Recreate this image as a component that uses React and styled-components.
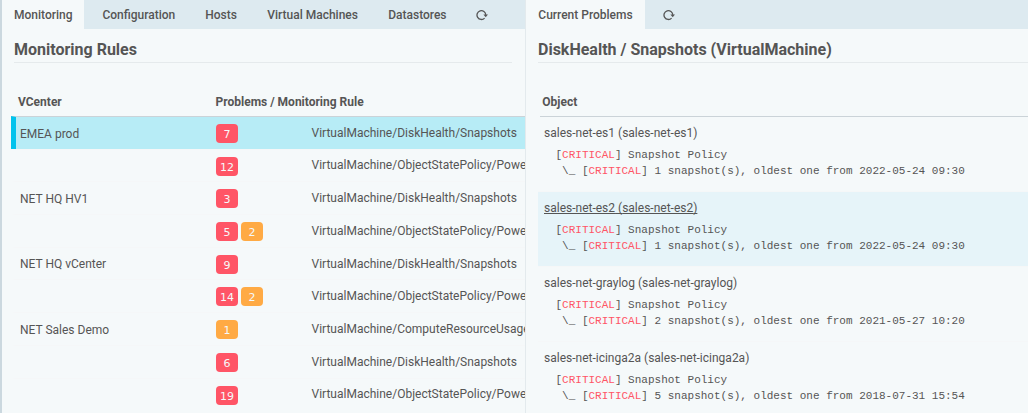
import React from "react";
import styled, { createGlobalStyle } from "styled-components";

const GlobalStyle = createGlobalStyle`
  * { box-sizing: border-box; }
  html, body { margin: 0; height: 413px; overflow: hidden; }
  body { background: #f5f9fa; color: #555; font: 12px/18px Roboto, sans-serif; }
`;

const Layout = styled.div`
  display: flex;
  width: 1028px;
  height: 413px;
  overflow: hidden;
`;

const Column = styled.section`
  width: ${(p) => p.$width}px;
  flex: none;
  overflow: hidden;
  border-left: ${(p) => p.$edge};
`;

const Tabs = styled.nav`
  display: flex;
  height: 29px;
  background: #ddeaf0;
`;

const Tab = styled.a`
  width: ${(p) => p.$width}px;
  padding-left: ${(p) => p.$pad}px;
  flex: none;
  font-weight: 500;
  line-height: 31px;
  white-space: nowrap;
  background: ${(p) => (p.$active ? "#f5f9fa" : "transparent")};
`;

const RefreshSvg = styled.svg`
  display: block;
  margin-top: 9px;
`;

const Title = styled.h1`
  margin: 0 ${(p) => p.$right}px 0 12px;
  height: 34px;
  padding-top: 11px;
  border-bottom: 1px solid #e5eaec;
  font-size: 16px;
  line-height: 19px;
  font-weight: 700;
  white-space: nowrap;
`;

const HeadRow = styled.div`
  display: flex;
  height: 54px;
  margin-left: ${(p) => p.$left}px;
  padding: 30px 0 0 ${(p) => p.$pad}px;
  border-bottom: 1px solid #cbd3d8;
  font-weight: 700;
  white-space: nowrap;
`;

const HeadCell = styled.div`
  width: ${(p) => p.$width};
`;

const RuleTable = styled.div`
  margin-top: -1px;
  padding-left: 9px;
`;

const RuleRow = styled.div`
  display: flex;
  height: 32.7px;
  border-left: 5px solid ${(p) => (p.$active ? "#00c3ed" : "transparent")};
  border-top: ${(p) => (p.$active ? "1px solid #cbd3d8" : "1px solid #f5f7f8")};
  background: ${(p) => (p.$active ? "#b7ecf6" : "transparent")};
  background-clip: padding-box;
  white-space: nowrap;
`;

const VCenter = styled.div`
  width: 200px;
  padding: 7.7px 0 0 4px;
  flex: none;
`;

const Badges = styled.div`
  display: flex;
  gap: 3px;
  width: 95.5px;
  padding-top: 7px;
  flex: none;
`;

const Badge = styled.span`
  width: 22px;
  height: 19px;
  border-radius: 4px;
  background: ${(p) => (p.$state === "warning" ? "#ffaa44" : "#ff5566")};
  color: #f5f9fa;
  font: 11px/21px "DejaVu Sans", sans-serif;
  text-align: center;
`;

const RuleName = styled.div`
  padding-top: 6.8px;
`;

const ObjectRow = styled.article`
  height: 75px;
  margin-left: 12px;
  padding: 7px 0 0 6px;
  border-bottom: 1px solid #f5f7f8;
  background: ${(p) => (p.$hover ? "#e6f4f9" : "transparent")};
  white-space: nowrap;
`;

const ObjectLink = styled.a`
  display: block;
  height: 23px;
  text-decoration: ${(p) => (p.$hover ? "underline" : "none")};
  text-decoration-skip-ink: none;
`;

const Output = styled.pre`
  margin: 0 0 0 11.5px;
  font: 11px/16px "Liberation Mono", monospace;
`;

const Critical = styled.span`
  color: #ff5566;
`;

const RefreshIcon = () => (
  <RefreshSvg width="12" height="12" viewBox="0 0 12 12">
    <path d="M8.6 9.1A4.4 4.4 0 1 1 9.8 5.9" fill="none" stroke="#555" strokeWidth="1.3" />
    <path d="M7.4 5.4H12L9.7 8.3Z" fill="#555" />
  </RefreshSvg>
);

const rules = [
  ["EMEA prod", 7, 0, "DiskHealth/Snapshots"],
  ["", 12, 0, "ObjectStatePolicy/PowerState"],
  ["NET HQ HV1", 3, 0, "DiskHealth/Snapshots"],
  ["", 5, 2, "ObjectStatePolicy/PowerState"],
  ["NET HQ vCenter", 9, 0, "DiskHealth/Snapshots"],
  ["", 14, 2, "ObjectStatePolicy/PowerState"],
  ["NET Sales Demo", 0, 1, "ComputeResourceUsage/Memory"],
  ["", 6, 0, "DiskHealth/Snapshots"],
  ["", 19, 0, "ObjectStatePolicy/PowerState"],
];

const objects = [
  ["sales-net-es1", 1, "2022-05-24 09:30"],
  ["sales-net-es2", 1, "2022-05-24 09:30"],
  ["sales-net-graylog", 2, "2021-05-27 10:20"],
  ["sales-net-icinga2a", 5, "2018-07-31 15:54"],
];

export default function App() {
  return (
    <Layout>
      <GlobalStyle />
      <Column $width={525} $edge="2px solid #cbd8df">
        <Tabs>
          <Tab $active $width={82} $pad={12}>Monitoring</Tab>
          <Tab $width={103} $pad={18.4}>Configuration</Tab>
          <Tab $width={62} $pad={18.2}>Hosts</Tab>
          <Tab $width={121} $pad={18.2}>Virtual Machines</Tab>
          <Tab $width={88} $pad={18.2}>Datastores</Tab>
          <Tab $width={48} $pad={18.4}><RefreshIcon /></Tab>
        </Tabs>
        <Title $right={13}>Monitoring Rules</Title>
        <HeadRow $left={14} $pad={2}>
          <HeadCell $width="197.5px">VCenter</HeadCell>
          <HeadCell $width="auto">Problems / Monitoring Rule</HeadCell>
        </HeadRow>
        <RuleTable>
          {rules.map(([vcenter, critical, warning, rule], i) => (
            <RuleRow key={i} $active={i === 0}>
              <VCenter>{vcenter}</VCenter>
              <Badges>
                {critical > 0 && <Badge>{critical}</Badge>}
                {warning > 0 && <Badge $state="warning">{warning}</Badge>}
              </Badges>
              <RuleName>VirtualMachine/{rule}</RuleName>
            </RuleRow>
          ))}
        </RuleTable>
      </Column>
      <Column $width={503} $edge="1px solid #e3eaed">
        <Tabs>
          <Tab $active $width={119} $pad={12.3}>Current Problems</Tab>
          <Tab $width={48} $pad={17.6}><RefreshIcon /></Tab>
        </Tabs>
        <Title $right={0}>DiskHealth / Snapshots (VirtualMachine)</Title>
        <HeadRow $left={14} $pad={2.3}>
          <HeadCell $width="auto">Object</HeadCell>
        </HeadRow>
        {objects.map(([name, count, date], i) => (
          <ObjectRow key={name} $hover={i === 1}>
            <ObjectLink $hover={i === 1}>{name} ({name})</ObjectLink>
            <Output>
              [<Critical>CRITICAL</Critical>] Snapshot Policy{"\n \\_ "}
              [<Critical>CRITICAL</Critical>] {count} snapshot(s), oldest one from {date}
            </Output>
          </ObjectRow>
        ))}
      </Column>
    </Layout>
  );
}
